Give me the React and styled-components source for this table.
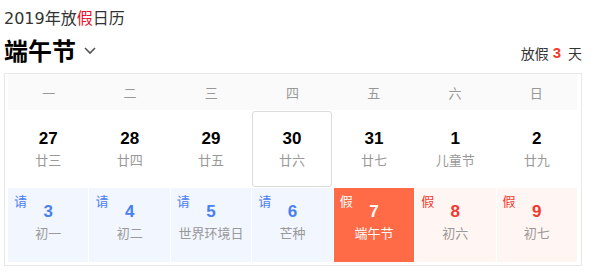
import React from 'react';
import styled, { createGlobalStyle } from 'styled-components';

const GlobalStyle = createGlobalStyle`
    body {
        margin: 0;
        background: #fff;
        font-family: "Liberation Sans", "Noto Sans CJK SC", sans-serif;
    }
`;

// styled components
const Page = styled.div`
    width: 578px;
    padding: 9px 0 0 4px;
`;
const Title = styled.div`
    font-family: "DejaVu Sans", "Noto Sans CJK SC", sans-serif;
    font-size: 16px;
    line-height: 20px;
    color: #333;
`;
const Red = styled.span`
    color: #e8102e;
`;
const HeadRow = styled.div`
    display: flex;
    align-items: center;
    justify-content: space-between;
    height: 32px;
    margin: 4px 0 8px;
`;
const Festival = styled.div`
    display: flex;
    align-items: center;
    gap: 7px;
    font-family: "Noto Sans CJK SC", sans-serif;
    font-size: 24px;
    font-weight: 700;
    color: #000;
    svg {
        width: 14px;
        height: 14px;
        margin-top: 1px;
    }
`;
const Summary = styled.div`
    display: flex;
    align-items: center;
    font-family: "Noto Sans CJK SC", sans-serif;
    font-size: 14px;
    color: #333;
    padding-top: 7px;
`;
const Count = styled.span`
    font-family: "Liberation Sans", sans-serif;
    font-size: 15px;
    font-weight: 700;
    color: #f33a2e;
    margin: 0 7px 0 4px;
`;
const Calendar = styled.div`
    border: 1px solid #e8e8e8;
    padding: 0 4px 3px 3px;
`;
const Weekdays = styled.div`
    display: grid;
    grid-template-columns: repeat(7, 1fr);
    height: 36px;
    background: #fafafa;
`;
const Weekday = styled.div`
    display: flex;
    align-items: center;
    justify-content: center;
    font-family: "Noto Sans CJK SC", sans-serif;
    font-size: 13px;
    color: #999;
`;
const Week = styled.div`
    display: grid;
    grid-template-columns: repeat(7, 1fr);
    column-gap: 1px;
    height: ${p => p.$height}px;
`;

const tones = {
    plain: { bg: '#fff', day: '#000', lunar: '#999', badge: 'transparent' },
    work: { bg: '#f2f6ff', day: '#4a80f0', lunar: '#999', badge: '#4a80f0' },
    rest: { bg: '#fff5f2', day: '#f3392f', lunar: '#999', badge: '#f3392f' },
    today: { bg: '#ff6a47', day: '#fff', lunar: '#fff', badge: '#fff' },
};

const Cell = styled.div`
    position: relative;
    display: flex;
    flex-direction: column;
    align-items: center;
    justify-content: center;
    background: ${p => tones[p.$tone].bg};
    border: 1px solid ${p => (p.$selected ? '#dcdcdc' : 'transparent')};
    border-radius: ${p => (p.$selected ? '3px' : '0')};
    margin: ${p => (p.$selected ? '1px 1px 1px 0' : '0')};
    padding-bottom: ${p => (p.$badge ? '5px' : '0')};
`;
const Badge = styled.span`
    position: absolute;
    top: 4px;
    left: 5px;
    font-family: "Noto Sans CJK SC", sans-serif;
    font-size: 13px;
    line-height: 16px;
    color: ${p => tones[p.$tone].badge};
`;
const Day = styled.div`
    font-size: 17px;
    font-weight: 700;
    line-height: 20px;
    color: ${p => tones[p.$tone].day};
`;
const Lunar = styled.div`
    font-family: "Noto Sans CJK SC", sans-serif;
    font-size: 13px;
    line-height: 21px;
    color: ${p => tones[p.$tone].lunar};
`;

const Chevron = () => (
    <svg viewBox="0 0 14 14" fill="none" stroke="#555" strokeWidth="1.6">
        <path d="M2 5l5 5 5-5" />
    </svg>
);

// data
const weekdays = ['一', '二', '三', '四', '五', '六', '日'];
const weeks = [
    {
        height: 78,
        days: [
            { day: 27, lunar: '廿三' },
            { day: 28, lunar: '廿四' },
            { day: 29, lunar: '廿五' },
            { day: 30, lunar: '廿六', selected: true },
            { day: 31, lunar: '廿七' },
            { day: 1, lunar: '儿童节' },
            { day: 2, lunar: '廿九' },
        ],
    },
    {
        height: 74,
        days: [
            { day: 3, lunar: '初一', tone: 'work', badge: '请' },
            { day: 4, lunar: '初二', tone: 'work', badge: '请' },
            { day: 5, lunar: '世界环境日', tone: 'work', badge: '请' },
            { day: 6, lunar: '芒种', tone: 'work', badge: '请' },
            { day: 7, lunar: '端午节', tone: 'today', badge: '假' },
            { day: 8, lunar: '初六', tone: 'rest', badge: '假' },
            { day: 9, lunar: '初七', tone: 'rest', badge: '假' },
        ],
    },
];

const App = () => (
    <Page>
        <GlobalStyle />
        <Title>
            2019年放<Red>假</Red>日历
        </Title>
        <HeadRow>
            <Festival>
                端午节
                <Chevron />
            </Festival>
            <Summary>
                放假<Count>3</Count>天
            </Summary>
        </HeadRow>
        <Calendar>
            <Weekdays>
                {weekdays.map(w => (
                    <Weekday key={w}>{w}</Weekday>
                ))}
            </Weekdays>
            {weeks.map((week, i) => (
                <Week key={i} $height={week.height}>
                    {week.days.map(d => {
                        const tone = d.tone || 'plain';
                        return (
                            <Cell key={d.day} $tone={tone} $selected={d.selected} $badge={!!d.badge}>
                                {d.badge && <Badge $tone={tone}>{d.badge}</Badge>}
                                <Day $tone={tone}>{d.day}</Day>
                                <Lunar $tone={tone}>{d.lunar}</Lunar>
                            </Cell>
                        );
                    })}
                </Week>
            ))}
        </Calendar>
    </Page>
);

export default App;
